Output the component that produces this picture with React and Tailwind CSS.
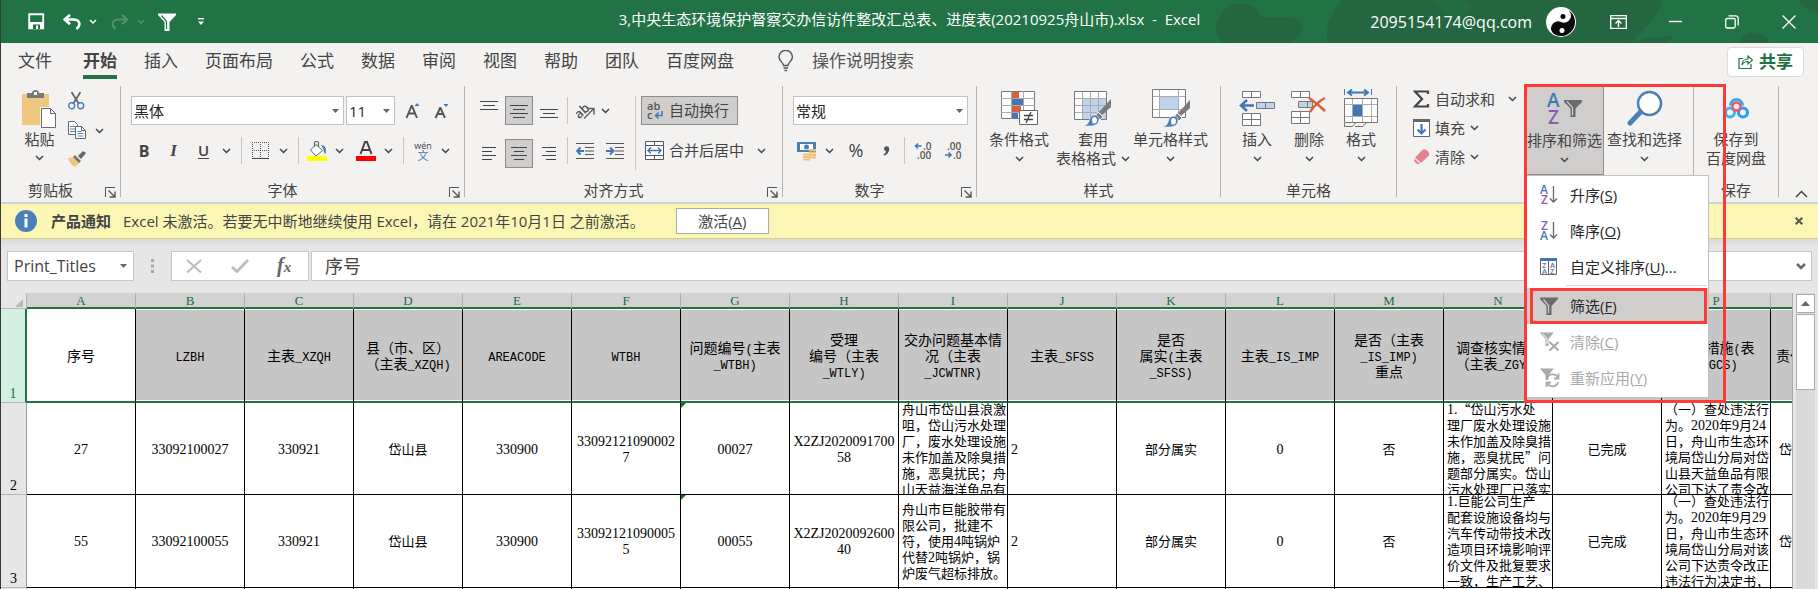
import React from "react";

/* ---------- small shared pieces ---------- */

const Svg = ({ w, h, children, className = "" }) => (
  <svg width={w} height={h} viewBox={`0 0 ${w} ${h}`} fill="none" aria-hidden="true" className={`shrink-0 ${className}`}>
    {children}
  </svg>
);

const Chevron = ({ className = "" }) => (
  <Svg w={9} h={6} className={className}>
    <path d="M1 1l3.500 3.500L8 1" stroke="#444" strokeWidth="1.500" />
  </Svg>
);

const Triangle = ({ className = "" }) => (
  <Svg w={7} h={4} className={className}>
    <path d="M0 0h7L3.500 4z" fill="#666" />
  </Svg>
);

const Launcher = () => (
  <button aria-label="对话框启动器" className="absolute right-1 bottom-1">
    <Svg w={12} h={12}>
      <path d="M1.500 11V1.500H11" stroke="#555" />
      <path d="M4.500 4.500l6 6M11 5.500V11H5.500" stroke="#555" strokeWidth="1.400" />
    </Svg>
  </button>
);

const Divider = ({ className = "h-[27px]" }) => <div className={`w-px shrink-0 bg-[#c8c6c4] ${className}`} />;

const Combo = ({ label, value, className }) => (
  <div className={`relative shrink-0 ${className}`}>
    <select
      aria-label={label}
      className="h-full w-full appearance-none border border-[#c3c1bf] bg-white pl-[2px] leading-[24px] text-[#262626] outline-none"
    >
      <option>{value}</option>
    </select>
    <Triangle className="pointer-events-none absolute top-1/2 right-[5px] -translate-y-1/2" />
  </div>
);

const Group = ({ label, launcher, className, children }) => (
  <>
    <section className={`relative flex h-[116px] shrink-0 flex-col ${className}`}>
      <div className="flex-1">{children}</div>
      <div className={`h-[21px] text-center leading-[19px] ${launcher ? "pr-[20px]" : ""}`}>{label}</div>
      {launcher && (
        <div className="absolute right-0 bottom-0">
          <Launcher />
        </div>
      )}
    </section>
    <div className="h-[111px] w-px shrink-0 bg-[#b6b4b2]" />
  </>
);

const BigButton = ({ icon, lines, inlineChevron, className = "" }) => (
  <button className={`flex shrink-0 flex-col items-center whitespace-nowrap leading-[19px] ${className}`}>
    <span className="flex h-[44px] items-center justify-center">{icon}</span>
    <span>{lines[0]}</span>
    {lines[1] ? (
      <span className="flex items-center gap-[5px]">
        {lines[1]}
        {inlineChevron && <Chevron />}
      </span>
    ) : (
      <span className="flex h-[19px] items-center">
        <Chevron />
      </span>
    )}
  </button>
);

/* ---------- icons ---------- */

const Lines = ({ w, rows, top = 0, h = 20 }) => (
  <Svg w={w} h={h}>
    {rows.map(([x, len], i) => (
      <rect key={i} x={x} y={top + i * 4} width={len} height="1" fill="#444" />
    ))}
  </Svg>
);

const Brush = ({ x, y }) => (
  <g transform={`translate(${x} ${y})`}>
    <path d="M28 0v8l-9 8-3-3z" fill="#7a7a7a" />
    <path d="M15 13l5 5-3 3-5-4z" fill="#7a7a7a" stroke="#f3f2f1" />
    <path d="M0 27c5-1 6-4 7-8 2-4 9-4 9 1 0 5-4 7-9 7z" fill="#4a80b9" stroke="#f3f2f1" strokeWidth=".6" />
    <path d="M9 21c0-4 5-4 5 0s-3 4-5 3c1-1 0-2 0-3z" fill="#fff" />
  </g>
);

const PasteIcon = () => (
  <Svg w={35} h={39}>
    <path d="M0 4h27v31H0z" fill="#edc87e" />
    <path d="M5 3h5c0-4 7-4 7 0h5v5H5z" fill="#7a7a7a" />
    <rect x="12" y="2" width="3" height="3" fill="#f3f2f1" />
    <path d="M18 17h12l5 6v15H18z" fill="#f3f2f1" />
    <path d="M19.500 18.500h9l5 5v14h-14z" fill="#fff" stroke="#6b6b6b" />
    <path d="M28.500 18.500v5h5" stroke="#6b6b6b" />
  </Svg>
);

const CutIcon = () => (
  <Svg w={17} h={19}>
    <path d="M3.500 1l7.500 12M12.500 1L5 13" stroke="#666" strokeWidth="1.800" />
    <circle cx="3.700" cy="14.700" r="3" stroke="#4a80b9" strokeWidth="1.400" />
    <circle cx="12.700" cy="14.700" r="3" stroke="#4a80b9" strokeWidth="1.400" />
  </Svg>
);

const CopyIcon = () => (
  <Svg w={18} h={19}>
    <path d="M.5.5h6l3 3v10h-9z" fill="#fff" stroke="#666" />
    <path d="M2 5.500h5M2 8h5M2 10.500h5" stroke="#4a80b9" />
    <path d="M7.500 5.500h6l4 4v8h-10z" fill="#fff" stroke="#666" />
    <path d="M13.500 5.500v4h4" stroke="#666" />
    <path d="M9.500 10.500h4M9.500 12.500h6M9.500 15h6" stroke="#4a80b9" />
  </Svg>
);

const PainterIcon = () => (
  <Svg w={18} h={16}>
    <path d="M0 7l7-1 5 5-5 5c-3-1-6-5-7-9z" fill="#edc87e" />
    <path d="M7 4l6 6-2 2-6-6z" fill="#777" />
    <path d="M10 5l5-5 3 2-5 6z" fill="#666" />
  </Svg>
);

const BorderIcon = () => (
  <Svg w={17} h={17}>
    <path d="M.5 0v16M16.500 0v16M8.500 0v16M0 .5h17M0 8.500h17" stroke="#555" strokeDasharray="1 1" />
    <path d="M0 16.500h17" stroke="#444" />
  </Svg>
);

const FillIcon = () => (
  <Svg w={20} h={20}>
    <path d="M9 3.500l6.500 6-6.500 5.500-5.500-6z" fill="#fff" stroke="#666" />
    <path d="M7.500 6V2c0-2 4-2 4 0v4" stroke="#666" strokeWidth="1.200" />
    <path d="M14 4c4 0 6 3 4.500 9-1.500-1-2-3-2-4.500z" fill="#4a80b9" />
    <rect y="15" width="20" height="5" fill="#ff0" />
  </Svg>
);

const FontColorIcon = () => (
  <Svg w={20} h={20}>
    <path d="M4.500 13L9 1h2l4.500 12M6.500 9h7" stroke="#444" strokeWidth="2" />
    <rect y="15" width="20" height="5" fill="#f00" />
  </Svg>
);

const IndentIcon = ({ right }) => (
  <Svg w={18} h={16}>
    <path d="M0 .5h18M9 4.500h9M9 8h9M9 11.500h9M0 15.500h18" stroke="#555" />
    {right ? (
      <path d="M0 8h6M4 4.500L7.500 8 4 11.500" stroke="#3f78b5" strokeWidth="2" />
    ) : (
      <path d="M2 8h6M4.500 4.500L1.200 8l3.300 3.500" stroke="#3f78b5" strokeWidth="2" />
    )}
  </Svg>
);

const OrientIcon = () => (
  <Svg w={20} h={18}>
    <text x="0" y="14" fontFamily="Open Sans" fontSize="13" fontWeight="600" fill="#555" transform="rotate(-42 6 12)">ab</text>
    <path d="M8 16.500L17.500 7M12 6.500h6v6" stroke="#666" strokeWidth="1.500" />
  </Svg>
);

const WrapIcon = () => (
  <Svg w={18} h={20}>
    <text x="0" y="9" fontFamily="Open Sans" fontSize="11" fontWeight="600" fill="#555">ab</text>
    <text x="0" y="18" fontFamily="Open Sans" fontSize="11" fontWeight="600" fill="#555">c</text>
    <path d="M15 10v4.500H9M11.500 11.500l-3 3 3 3" stroke="#3f78b5" strokeWidth="1.500" />
  </Svg>
);

const MergeIcon = () => (
  <Svg w={19} h={19}>
    <path d="M.5.5h18v18H.5zM.5 4.500h18M.5 14.500h18M9.500.5v4M9.500 14.500v4" fill="#fff" stroke="#555" />
    <path d="M3 9.500h13M6 6.500l-3 3 3 3M13 6.500l3 3-3 3" stroke="#3f78b5" strokeWidth="1.500" />
  </Svg>
);

const MoneyIcon = () => (
  <Svg w={20} h={20}>
    <path d="M0 1h19v10H0z" fill="#4a80b9" />
    <path d="M3 3h13v6H3z" fill="#fff" />
    <path d="M9.500 3.500a2.500 2.500 0 100 5 2.500 2.500 0 000-5z" fill="#4a80b9" />
    <path d="M12 9h7M12 11.500h7M12 14h7M12 16.500h7" stroke="#edc07a" strokeWidth="2" />
    <path d="M6 13.500h7M6 16h7M6 18.500h7" stroke="#edc07a" strokeWidth="2" />
  </Svg>
);

const DecimalIcon = ({ increase }) => (
  <Svg w={20} h={18}>
    <g fontFamily="Open Sans" fontSize="10" fontWeight="600" fill="#555">
      <text x={increase ? 9 : 3} y="8">{increase ? ".0" : ".00"}</text>
      <text x={increase ? 3 : 9} y="17">{increase ? ".00" : ".0"}</text>
    </g>
    {increase ? (
      <path d="M1.500 4h6M4 1.500L1.500 4 4 6.500" stroke="#3f78b5" strokeWidth="1.600" />
    ) : (
      <path d="M1 13h6M4.500 10.500L7 13l-2.500 2.500" stroke="#3f78b5" strokeWidth="1.600" />
    )}
  </Svg>
);

const CondFormatIcon = () => (
  <Svg w={38} h={36}>
    <path d="M1.500 1.500h33v27h-33z" fill="#fff" stroke="#777" />
    <path d="M1 8.500h34M1 15.500h34M1 22.500h34M11.500 1v28M23.500 1v28" stroke="#aaa" />
    <path d="M12 2h7v6h-7zM12 16h9v6h-9z" fill="#d9603b" />
    <path d="M12 9h11v6H12zM12 23h6v5h-6z" fill="#3f78b5" />
    <path d="M19.500 20.500h18v14h-18z" fill="#fff" stroke="#666" />
    <path d="M24 25.500h9M24 29.500h9M31 22l-5 11" stroke="#444" strokeWidth="1.300" />
  </Svg>
);

const TableFormatIcon = () => (
  <Svg w={38} h={36}>
    <path d="M.5 1.500h32v28H.5z" fill="#fff" stroke="#777" />
    <path d="M9 9h23v20H9z" fill="#bfd3ea" />
    <path d="M1 8.500h31M1 15.500h31M1 22.500h31M8.500 2v27M16.500 2v27M24.500 2v27" stroke="#aaa" />
    <Brush x={9} y={9} />
  </Svg>
);

const CellStyleIcon = () => (
  <Svg w={38} h={38}>
    <path d="M.5.500h33v28H.5z" fill="#fff" stroke="#777" />
    <path d="M1 7.500h32M1 20.500h32M7.500 1v27M26.500 1v27" stroke="#aaa" />
    <path d="M8 8h18v12H8z" fill="#bfd3ea" />
    <Brush x={10} y={11} />
  </Svg>
);

const InsertIcon = () => (
  <Svg w={36} h={36}>
    <path d="M3.500 1.500h18v6h-18zM12.500 1.500v6M3.500 23.500h18v12h-18zM3.500 29.500h18M12.500 23.500v12" fill="#fff" stroke="#777" />
    <path d="M17.500 12.500h18v6h-18z" fill="#bfd3ea" stroke="#777" />
    <path d="M26.500 12.500v6" stroke="#777" />
    <path d="M2 15.500h13M8 10l-6 5.500L8 21" stroke="#3f78b5" strokeWidth="2.500" />
  </Svg>
);

const DeleteIcon = () => (
  <Svg w={36} h={36}>
    <path d="M.5 1.500h18v6h-18zM9.500 1.500v6M.5 21.500h18v12h-18zM.5 27.500h18M9.500 21.500v12" fill="#fff" stroke="#777" />
    <path d="M7.500 11.500h14v6h-14z" fill="#bfd3ea" stroke="#777" />
    <path d="M16.500 11.500v6" stroke="#777" />
    <path d="M18 8c6 4 11 8 16 13M34 8c-6 3-11 8-15 14" stroke="#d9603b" strokeWidth="2.500" />
  </Svg>
);

const FormatIcon = () => (
  <Svg w={36} h={38}>
    <path d="M1.500 0v6M28.500 0v6" stroke="#3f78b5" />
    <path d="M5 3.500h20M9 .5l-4 3 4 3M21 .5l4 3-4 3" stroke="#3f78b5" strokeWidth="2" />
    <path d="M1.500 9.500h33v24h-33z" fill="#fff" stroke="#777" />
    <path d="M2 15.500h32M2 27.500h32M9.500 10v23M19.500 10v23M28.500 10v23" stroke="#aaa" />
    <path d="M10 16h9v11h-9z" fill="#3f78b5" />
    <path d="M1.500 34v3.500h8l3-3.500M12 37.500h8l3-3.500" stroke="#777" />
  </Svg>
);

const SumIcon = () => (
  <Svg w={17} h={18}>
    <path d="M15 4V1.500H2l7 7.500-7 7.500h13V14" stroke="#444" strokeWidth="2.200" />
  </Svg>
);

const FillDownIcon = () => (
  <Svg w={17} h={18}>
    <path d="M.5.500h16v17H.5z" fill="#fff" stroke="#666" />
    <path d="M0 0h17v3H0z" fill="#666" />
    <path d="M8.500 5v9M4.500 10.500l4 4 4-4" stroke="#3f78b5" strokeWidth="2.200" />
  </Svg>
);

const EraserIcon = () => (
  <Svg w={17} h={16}>
    <path d="M10 0.500h3l3 3v3L8 14 2 8.500z" fill="#e6808f" />
    <path d="M1.500 9.500L7 15H4l-3-3z" fill="#e6808f" />
  </Svg>
);

const Funnel = ({ fill = "#6b6b6b", inner = "#fff" }) => (
  <Svg w={18} h={18}>
    <path d="M0 .5h18v1.500L11.500 9v9h-5V9L0 2z" fill={fill} />
    <path d="M3.500 2.500L8.500 8.500v7.500" stroke={inner} strokeWidth="1.200" />
  </Svg>
);

const GlyphA = ({ x, y, s = 1 }) => (
  <text x={x} y={y} fontFamily="Open Sans" fontWeight="600" fontSize={10 * s} fill="#3f78b5">A</text>
);
const GlyphZ = ({ x, y, s = 1 }) => (
  <text x={x} y={y} fontFamily="Open Sans" fontWeight="600" fontSize={10 * s} fill="#8e5ab5">Z</text>
);

const SortFilterIcon = () => (
  <Svg w={36} h={34}>
    <GlyphA x={0} y={15} s={1.9} />
    <GlyphZ x={1} y={32} s={1.9} />
    <path d="M17 8h18v2l-6.500 6.500V25h-5v-8.500L17 10z" fill="#6b6b6b" />
    <path d="M20 9.500l5.500 6v8" stroke="#d0cecd" strokeWidth="1.200" />
  </Svg>
);

const SearchIcon = () => (
  <Svg w={36} h={36}>
    <circle cx="22.500" cy="13.500" r="11.500" fill="#fff" stroke="#4a80b9" strokeWidth="2.500" />
    <path d="M13.500 22L3 33" stroke="#4a80b9" strokeWidth="5" strokeLinecap="round" />
  </Svg>
);

const NetdiskIcon = () => (
  <Svg w={25} h={21}>
    <circle cx="6" cy="14.500" r="4.500" stroke="#38b6f0" strokeWidth="3" />
    <circle cx="19" cy="14.500" r="4.500" stroke="#2a9df0" strokeWidth="3" />
    <path d="M6.500 7.500a6 6 0 0112 0" stroke="#38a6f0" strokeWidth="3" />
    <circle cx="12.500" cy="8.500" r="4" stroke="#ef5468" strokeWidth="2.500" />
  </Svg>
);

const SortIcon = ({ desc }) => (
  <Svg w={18} h={20}>
    {desc ? <GlyphZ x={1} y={9} s={1.2} /> : <GlyphA x={0} y={9} s={1.2} />}
    {desc ? <GlyphA x={0} y={19} s={1.2} /> : <GlyphZ x={1} y={19} s={1.2} />}
    <path d="M13.500 1v16M10 13.500l3.500 3.500 3.500-3.500" stroke="#666" strokeWidth="1.300" />
  </Svg>
);

const CustomSortIcon = () => (
  <Svg w={18} h={18}>
    <path d="M.5.500h16v16H.5zM8.500 1v16" fill="#fff" stroke="#666" />
    <path d="M0 0h17v3H0z" fill="#3f78b5" />
    <GlyphZ x={2} y={9.5} s={0.75} />
    <GlyphA x={2} y={16} s={0.75} />
    <GlyphA x={10} y={9.5} s={0.75} />
    <GlyphZ x={10} y={16} s={0.75} />
  </Svg>
);

const ClearFilterIcon = () => (
  <Svg w={20} h={20}>
    <path d="M0 .5h14L8.500 7v7h-3V7z" fill="#a9a9a9" />
    <path d="M3 2l4 5v5" stroke="#fff" />
    <path d="M9.500 10l9 8.500M18.500 10l-9 8.500" stroke="#a9a9a9" strokeWidth="2" />
  </Svg>
);

const ReapplyIcon = () => (
  <Svg w={20} h={20}>
    <path d="M0 .5h14L8.500 7v5h-3V7z" fill="#a9a9a9" />
    <path d="M7 11c1-6 9-6 11-1M18.500 5.500V10.500H14M18 14c-1 5-8 6-11 1M6.500 19v-4.500H11" stroke="#a9a9a9" strokeWidth="1.800" />
  </Svg>
);

/* ---------- title bar ---------- */

function TitleBar() {
  return (
    <header className="relative grid h-[43px] grid-cols-[1fr_auto_1fr] items-center overflow-hidden bg-[#217346] text-white">
      <svg viewBox="0 0 640 43" width="640" height="43" aria-hidden="true" className="absolute top-0 right-0">
        <path d="M46 43c-10-8-10-20-2-30 8-12 30-14 38 2 4 8 42-6 42 12 0 8-6 12-12 16z" fill="#246640" />
        <path d="M150 43c-4-18 4-32 14-43h320c-4 20-22 30-30 43z" fill="#246640" />
        <path d="M254 0h32l8 6-12 12-14-3z" fill="#226d43" />
        <path d="M455 43c10-6 25-6 40-7l-6 7zM562 43c4-14 22-14 30 0zM620 0h20v12c-12 0-16-6-20-12z" fill="#246640" />
      </svg>
      <div className="relative flex items-center pl-[27px]">
        <button aria-label="保存">
          <Svg w={17} h={17}>
            <path d="M1.200 1.200h14v14h-14z" stroke="#fff" strokeWidth="1.900" />
            <path d="M2 9h13v7H2z" fill="#fff" />
            <path d="M5 11.500h7V16H5z" fill="#217346" />
            <path d="M8 12.500h2V16H8z" fill="#fff" />
          </Svg>
        </button>
        <button aria-label="撤消" className="ml-[18px]">
          <Svg w={18} h={16}>
            <path d="M2 5.500h8c7.500 0 8 6 3.500 9.500M7 .8L1.800 5.500 7 10.200" stroke="#fff" strokeWidth="2.600" />
          </Svg>
        </button>
        <Svg w={8} h={5} className="ml-2">
          <path d="M1 1l3 3 3-3" stroke="#fff" strokeWidth="1.400" />
        </Svg>
        <button aria-label="恢复" className="ml-[14px]" disabled>
          <Svg w={18} h={16}>
            <path d="M16 5.500H8C.5 5.500 0 11.500 4.500 15M11 .8l5.200 4.700L11 10.200" stroke="#4f9170" strokeWidth="2.200" />
          </Svg>
        </button>
        <Svg w={8} h={5} className="ml-2">
          <path d="M1 1l3 3 3-3" stroke="#4f9170" strokeWidth="1.400" />
        </Svg>
        <button aria-label="筛选" className="ml-[13px]">
          <Funnel fill="#fff" inner="#217346" />
        </button>
        <button aria-label="自定义快速访问工具栏" className="ml-[22px]">
          <Svg w={6} h={7}>
            <path d="M0 .7h6" stroke="#fff" strokeWidth="1.400" />
            <path d="M0 3.500h6L3 7z" fill="#fff" />
          </Svg>
        </button>
      </div>
      <h1 className="relative pb-[5px] text-[15px] leading-5 whitespace-pre">
        3,中央生态环境保护督察交办信访件整改汇总表、进度表(20210925舟山市).xlsx{"  -  "}Excel
      </h1>
      <div className="relative flex items-center justify-end pr-[22px]">
        <span className="text-[16px] leading-5">2095154174@qq.com</span>
        <Svg w={30} h={30} className="ml-[14px]">
          <circle cx="15" cy="15" r="15" fill="#fff" />
          <path d="M15 1a14 14 0 010 28 7 7 0 010-14 7 7 0 000-14z" fill="#0a0a0a" transform="rotate(25 15 15)" />
          <circle cx="17" cy="9.500" r="2.500" fill="#0a0a0a" />
          <circle cx="16" cy="23.500" r="2.500" fill="#fff" />
        </Svg>
        <button aria-label="功能区显示选项" className="ml-[34px]">
          <Svg w={17} h={14}>
            <path d="M.7.700h15.600v12.600H.7zM.7 3.500h15.600" stroke="#fff" strokeWidth="1.300" />
            <path d="M8.500 12V6M5.500 8.500l3-3 3 3" stroke="#fff" strokeWidth="1.400" />
          </Svg>
        </button>
        <button aria-label="最小化" className="ml-[42px]">
          <Svg w={13} h={14}>
            <path d="M0 6.500h13" stroke="#fff" strokeWidth="1.400" />
          </Svg>
        </button>
        <button aria-label="还原" className="ml-[43px]">
          <Svg w={14} h={14}>
            <rect x=".7" y="3.500" width="9.500" height="9.500" rx="1.500" stroke="#fff" strokeWidth="1.300" />
            <path d="M3.500.8h7c2 0 2.700 1 2.700 2.700v7" stroke="#fff" strokeWidth="1.300" />
          </Svg>
        </button>
        <button aria-label="关闭" className="ml-[43px]">
          <Svg w={14} h={14}>
            <path d="M.5.500l13 13M13.500.500l-13 13" stroke="#fff" strokeWidth="1.300" />
          </Svg>
        </button>
      </div>
    </header>
  );
}

/* ---------- ribbon ---------- */

const TABS = ["插入", "页面布局", "公式", "数据", "审阅", "视图", "帮助", "团队", "百度网盘"];

function Tabs() {
  return (
    <nav className="flex h-[43px] items-start pt-[4px] pr-[14px] pl-[17px] text-[17px] leading-[28px] text-[#444]">
      <button className="mr-[31px]">文件</button>
      <button className="mr-[27px] border-b-4 border-[#217346] font-bold">开始</button>
      <div className="flex gap-[27px]">
        {TABS.map((t) => (
          <button key={t}>{t}</button>
        ))}
      </div>
      <label className="ml-[44px] flex items-center gap-[18px]">
        <Svg w={16} h={22}>
          <path d="M5.500 15.500c0-3-4.500-4.500-4.500-8.500a6.700 6.700 0 0113.400 0c0 4-4.400 5.500-4.400 8.500zM5.500 18h4.500M6.500 20.500h2.500" stroke="#555" strokeWidth="1.400" />
        </Svg>
        <input
          aria-label="操作说明搜索"
          placeholder="操作说明搜索"
          className="w-[160px] bg-transparent leading-[28px] outline-none placeholder:text-[#555] placeholder:opacity-100"
        />
      </label>
      <button className="ml-auto flex h-[30px] items-center gap-[6px] rounded-sm border border-[#dddbd9] bg-white px-[10px] font-bold text-[#217346]">
        <Svg w={15} h={16}>
          <path d="M5 4.500H1v10h12V10" stroke="#217346" strokeWidth="1.200" />
          <path d="M4 11c0-4 3-6 6-6V2l4.500 4L10 10V7.500C7 7.500 5 9 4 11z" stroke="#217346" strokeWidth="1.200" />
        </Svg>
        共享
      </button>
    </nav>
  );
}

const MENU = [
  { icon: <SortIcon />, text: "升序", k: "S" },
  { icon: <SortIcon desc />, text: "降序", k: "O" },
  { icon: <CustomSortIcon />, text: "自定义排序", k: "U", tail: "..." },
  { icon: <Funnel fill="#6b6b6b" inner="#d0cecd" />, text: "筛选", k: "F", active: true },
  { icon: <ClearFilterIcon />, text: "清除", k: "C", disabled: true },
  { icon: <ReapplyIcon />, text: "重新应用", k: "Y", disabled: true },
];

function SortMenu() {
  return (
    <ul role="menu" className="absolute top-[89px] left-0 z-20 w-[183px] border border-[#c3c1bf] border-l-transparent bg-white py-px">
      {MENU.map((m) => (
        <li key={m.text} role="none">
          {m.active && <div className="mr-px ml-[39px] h-[3px] border-t border-[#d8d6d4]" />}
          <button
            role="menuitem"
            disabled={m.disabled}
            className={`relative flex h-9 w-full items-center pl-[13px] whitespace-nowrap ${
              m.active ? "bg-[#d0cecd] text-[#262626]" : m.disabled ? "text-[#a9a9a9]" : "text-[#262626]"
            }`}
          >
            <span className="w-[30px]">{m.icon}</span>
            <span>
              {m.text}(<u>{m.k}</u>){m.tail}
            </span>
            {m.active && <span className="absolute inset-y-0 right-px left-[3px] border-[3px] border-[#ff3838]" />}
          </button>
        </li>
      ))}
    </ul>
  );
}

function Ribbon() {
  return (
    <div className="flex h-[118px] border-b-2 border-[#d2d0ce] text-[15px] text-[#444]">
      <Group label="剪贴板" launcher className="w-[119px]">
        <div className="flex pt-[4px] pl-[20px]">
          <button className="flex w-[37px] flex-col items-center leading-[19px]">
            <PasteIcon />
            <span className="mt-px whitespace-nowrap">粘贴</span>
            <span className="flex h-[17px] items-center">
              <Chevron />
            </span>
          </button>
          <div className="ml-[10px] flex flex-col gap-[11px] pt-px">
            <button aria-label="剪切">
              <CutIcon />
            </button>
            <button aria-label="复制" className="flex items-center gap-[9px]">
              <CopyIcon />
              <Chevron />
            </button>
            <button aria-label="格式刷">
              <PainterIcon />
            </button>
          </div>
        </div>
      </Group>

      <Group label="字体" launcher className="w-[343px]">
        <div className="flex items-center pt-[10px] pl-[10px]">
          <Combo label="字体" value="黑体" className="h-[29px] w-[213px]" />
          <Combo label="字号" value="11" className="ml-[2px] h-[29px] w-[49px]" />
          <button aria-label="增大字号" className="ml-[10px]">
            <Svg w={16} h={18}>
              <path d="M1.500 16L6.500 4h.5l5 12M3.500 11.500h6.500" stroke="#555" strokeWidth="1.900" />
              <path d="M9.500 4h5L12 1z" fill="#3f78b5" />
            </Svg>
          </button>
          <button aria-label="减小字号" className="ml-[13px]">
            <Svg w={16} h={18}>
              <path d="M1.500 16L6 6h.5l4.500 10M3.500 12h5.500" stroke="#555" strokeWidth="1.900" />
              <path d="M9.500 2h5L12 5z" fill="#3f78b5" />
            </Svg>
          </button>
        </div>
        <div className="mt-[11px] flex h-[29px] items-center pl-[9px]">
          <button className="w-[28px] font-[Open_Sans] text-[16px] font-bold">B</button>
          <button className="w-[31px] font-[Liberation_Serif] text-[17px] font-bold italic">I</button>
          <button className="w-[29px] font-[Open_Sans] text-[15px] font-semibold underline underline-offset-2">U</button>
          <Chevron className="ml-1" />
          <Divider className="ml-[10px] h-[27px]" />
          <button aria-label="边框" className="ml-[10px] flex items-center gap-[10px]">
            <BorderIcon />
            <Chevron />
          </button>
          <Divider className="ml-[10px] h-[27px]" />
          <button aria-label="填充颜色" className="ml-[8px] flex items-center gap-[8px]">
            <FillIcon />
            <Chevron />
          </button>
          <button aria-label="字体颜色" className="ml-[12px] flex items-center gap-[8px]">
            <FontColorIcon />
            <Chevron />
          </button>
          <Divider className="ml-[10px] h-[27px]" />
          <button aria-label="拼音指南" className="ml-[10px] flex items-center gap-[9px]">
            <span className="flex w-[18px] flex-col items-center text-[9px] leading-[9px]">
              wén<b className="text-[11px] leading-[11px] font-normal text-[#3f78b5]">文</b>
            </span>
            <Chevron />
          </button>
        </div>
      </Group>

      <Group label="对齐方式" launcher className="w-[317px]">
        <div className="flex pt-[10px] pl-[10px]">
          <div className="grid grid-cols-[28px_28px_28px] gap-x-[2px] gap-y-[11px]">
            <button aria-label="顶端对齐" className="flex h-[29px] items-center justify-center">
              <Lines w={18} rows={[[0, 18], [3, 12], [0, 18]]} />
            </button>
            <button aria-label="垂直居中" className="flex h-[29px] items-center justify-center border border-[#8f8d8b] bg-[#d0cecd]">
              <Lines w={18} top={4} rows={[[0, 18], [3, 12], [0, 18], [3, 12]]} />
            </button>
            <button aria-label="底端对齐" className="flex h-[29px] items-center justify-center">
              <Lines w={18} top={8} rows={[[0, 18], [3, 12], [0, 18]]} />
            </button>
            <button aria-label="左对齐" className="flex h-[29px] items-center justify-center">
              <Lines w={14} top={4} rows={[[0, 14], [0, 10], [0, 14], [0, 10]]} />
            </button>
            <button aria-label="居中" className="flex h-[29px] items-center justify-center border border-[#8f8d8b] bg-[#d0cecd]">
              <Lines w={16} top={4} rows={[[0, 16], [3, 10], [0, 16], [3, 10]]} />
            </button>
            <button aria-label="右对齐" className="flex h-[29px] items-center justify-center">
              <Lines w={14} top={4} rows={[[0, 14], [4, 10], [0, 14], [4, 10]]} />
            </button>
          </div>
          <div className="ml-[4px] flex flex-col gap-[13px] pt-px">
            <Divider />
            <Divider />
          </div>
          <div className="ml-[8px] flex w-[59px] flex-col gap-[11px]">
            <button aria-label="方向" className="flex h-[29px] items-center gap-[5px]">
              <OrientIcon />
              <Chevron />
            </button>
            <div className="flex h-[29px] items-center gap-[12px]">
              <button aria-label="减少缩进量">
                <IndentIcon />
              </button>
              <button aria-label="增加缩进量">
                <IndentIcon right />
              </button>
            </div>
          </div>
          <Divider className="h-[74px]" />
          <div className="ml-[5px] flex flex-col items-start gap-[11px] whitespace-nowrap">
            <button className="flex h-[29px] items-center gap-[4px] border border-[#8f8d8b] bg-[#d0cecd] pr-[8px] pl-[5px]">
              <WrapIcon />
              自动换行
            </button>
            <button className="flex h-[29px] items-center gap-[5px] pl-[4px]">
              <MergeIcon />
              合并后居中
              <Chevron className="ml-[8px]" />
            </button>
          </div>
        </div>
      </Group>

      <Group label="数字" launcher className="w-[193px]">
        <div className="pt-[10px] pl-[10px]">
          <Combo label="数字格式" value="常规" className="h-[29px] w-[175px]" />
          <div className="mt-[11px] flex h-[29px] items-center pl-[4px]">
            <button aria-label="会计数字格式" className="flex items-center gap-[8px]">
              <MoneyIcon />
              <Chevron />
            </button>
            <button className="ml-[12px] w-[20px] text-[18px]">%</button>
            <button aria-label="千位分隔样式" className="ml-[17px]">
              <Svg w={7} h={10}>
                <path d="M1 2.500a2.700 2.700 0 015.300 0C6.300 6 4 9 1 9.500l-.5-1C2 7.500 3 6.500 3 5 2 5 1 4 1 2.500z" fill="#555" />
              </Svg>
            </button>
            <Divider className="ml-[14px] h-[27px]" />
            <button aria-label="增加小数位数" className="ml-[9px]">
              <DecimalIcon increase />
            </button>
            <button aria-label="减少小数位数" className="ml-[10px]">
              <DecimalIcon />
            </button>
          </div>
        </div>
      </Group>

      <Group label="样式" className="w-[243px]">
        <div className="flex">
          <BigButton icon={<CondFormatIcon />} lines={["条件格式"]} className="ml-[5px] w-[74px]" />
          <BigButton icon={<TableFormatIcon />} lines={["套用", "表格格式"]} inlineChevron className="w-[74px]" />
          <BigButton icon={<CellStyleIcon />} lines={["单元格样式"]} className="w-[81px]" />
        </div>
      </Group>

      <Group label="单元格" className="w-[175px]">
        <div className="flex pl-[10px]">
          <BigButton icon={<InsertIcon />} lines={["插入"]} className="w-[52px]" />
          <BigButton icon={<DeleteIcon />} lines={["删除"]} className="w-[52px]" />
          <BigButton icon={<FormatIcon />} lines={["格式"]} className="w-[52px]" />
        </div>
      </Group>

      <Group className="w-[296px]">
        <div className="flex">
          <div className="flex w-[129px] shrink-0 flex-col items-start pl-[16px] whitespace-nowrap">
            <button className="flex h-[26px] items-center gap-[5px]">
              <SumIcon />
              自动求和
              <Chevron className="ml-[8px]" />
            </button>
            <button className="mt-[3px] flex h-[26px] items-center gap-[5px]">
              <FillDownIcon />
              填充
              <Chevron />
            </button>
            <button className="mt-[3px] flex h-[26px] items-center gap-[5px]">
              <EraserIcon />
              清除
              <Chevron />
            </button>
          </div>
          <div className="relative pt-px">
            <BigButton
              icon={<SortFilterIcon />}
              lines={["排序和筛选"]}
              className="h-[88px] w-[78px] border-r border-b border-[#8f8d8b] bg-[#d0cecd]"
            />
            <SortMenu />
            <div className="pointer-events-none absolute top-[-2px] left-[-2px] z-30 h-[319px] w-[202px] border-[3px] border-[#ff3838]" />
          </div>
          <BigButton icon={<SearchIcon />} lines={["查找和选择"]} className="w-[81px]" />
        </div>
      </Group>

      <Group label="保存" className="w-[84px]">
        <BigButton icon={<NetdiskIcon />} lines={["保存到", "百度网盘"]} className="w-full" />
      </Group>

      <button aria-label="折叠功能区" className="mt-auto mr-[10px] mb-1 ml-auto">
        <Svg w={13} h={8}>
          <path d="M1 7l5.500-5.500L12 7" stroke="#444" strokeWidth="1.500" />
        </Svg>
      </button>
    </div>
  );
}

/* ---------- notice and formula bar ---------- */

function Notice() {
  return (
    <div className="flex h-[35px] items-center border-b border-[#d6d08a] bg-[#fcf6b5] pr-[15px] pl-[14px] text-[15px] leading-5 whitespace-nowrap text-[#444]">
      <Svg w={22} h={22}>
        <circle cx="11" cy="11" r="11" fill="#4a80b9" />
        <rect x="9.500" y="4" width="3" height="3" fill="#fff" />
        <rect x="9.500" y="8.500" width="3" height="9" fill="#fff" />
      </Svg>
      <strong className="ml-[14px]">产品通知</strong>
      <span className="ml-[12px]">Excel 未激活。若要无中断地继续使用 Excel，请在 2021年10月1日 之前激活。</span>
      <button className="ml-[31px] h-[26px] w-[93px] border border-[#ababab] bg-white">
        激活(<u>A</u>)
      </button>
      <button aria-label="关闭通知" className="ml-auto">
        <Svg w={8} h={8}>
          <path d="M.7.700l6.600 6.600M7.300.700L.7 7.300" stroke="#555" strokeWidth="2" />
        </Svg>
      </button>
    </div>
  );
}

function FormulaBar() {
  return (
    <div className="flex h-[54px] items-center bg-linear-to-b from-[#d9d9d9] to-[#e6e6e6] to-15% pr-[6px] pl-[6px] text-[#444]">
      <div className="relative h-[30px] w-[127px] shrink-0">
        <select aria-label="名称框" className="h-full w-full appearance-none border border-[#c6c6c6] bg-white pl-[6px] text-[16px] leading-7 outline-none">
          <option>Print_Titles</option>
        </select>
        <Triangle className="pointer-events-none absolute top-[13px] right-[7px]" />
      </div>
      <Svg w={3} h={14} className="ml-[17px]">
        <path d="M0 0h3v3H0zM0 5.500h3v3H0zM0 11h3v3H0z" fill="#a6a6a6" />
      </Svg>
      <div className="ml-[17px] flex h-[30px] w-[138px] shrink-0 items-center border border-[#c6c6c6] bg-white">
        <button aria-label="取消" className="ml-[14px]">
          <Svg w={16} h={14}>
            <path d="M1 1l14 12.500M15 1L1 13.500" stroke="#bdbdbd" strokeWidth="2" />
          </Svg>
        </button>
        <button aria-label="输入" className="ml-[29px]">
          <Svg w={18} h={14}>
            <path d="M1 8l5 4.500L17 1" stroke="#bdbdbd" strokeWidth="2.800" />
          </Svg>
        </button>
        <button aria-label="插入函数" className="ml-[28px] font-[Liberation_Serif] text-[20px] leading-6 font-bold text-[#666] italic">
          f<span className="text-[15px]">x</span>
        </button>
      </div>
      <label className="ml-[2px] flex h-[30px] min-w-0 flex-1 items-center border border-[#c6c6c6] bg-white pr-[5px] pl-[13px]">
        <input aria-label="编辑栏" defaultValue="序号" className="min-w-0 flex-1 text-[18px] leading-7 outline-none" />
        <Svg w={10} h={7}>
          <path d="M1 1l4 4 4-4" stroke="#666" strokeWidth="2.500" />
        </Svg>
      </label>
    </div>
  );
}

/* ---------- sheet ---------- */

const COLUMNS = "ABCDEFGHIJKLMNOPQ".split("");

const HEADINGS = [
  ["序号"],
  ["LZBH"],
  ["主表_XZQH"],
  ["县（市、区）", "（主表_XZQH)"],
  ["AREACODE"],
  ["WTBH"],
  ["问题编号(主表", "_WTBH)"],
  ["受理", "编号（主表", "_WTLY)"],
  ["交办问题基本情", "况（主表", "_JCWTNR)"],
  ["主表_SFSS"],
  ["是否", "属实(主表", "_SFSS)"],
  ["主表_IS_IMP"],
  ["是否（主表", "_IS_IMP)", "重点"],
  ["调查核实情况", "（主表_ZGYQ)"],
  [],
  ["整改措施(表", "_ZGCS)"],
  ["责任"],
];

const ROWS = [
  [
    ["27"], ["33092100027"], ["330921"], ["岱山县"], ["330900"], ["33092121090002", "7"], ["00027"],
    ["X2ZJ2020091700", "58"],
    ["舟山市岱山县浪激", "咀，岱山污水处理", "厂，废水处理设施", "未作加盖及除臭措", "施，恶臭扰民；舟", "山天益海洋鱼品有"],
    ["2"], ["部分属实"], ["0"], ["否"],
    ["1.“岱山污水处", "理厂废水处理设施", "未作加盖及除臭措", "施，恶臭扰民”问", "题部分属实。岱山", "污水处理厂已落实"],
    ["已完成"],
    ["（一）查处违法行", "为。2020年9月24", "日，舟山市生态环", "境局岱山分局对岱", "山县天益鱼品有限", "公司下达了责令改"],
    ["岱"],
  ],
  [
    ["55"], ["33092100055"], ["330921"], ["岱山县"], ["330900"], ["33092121090005", "5"], ["00055"],
    ["X2ZJ2020092600", "40"],
    ["舟山市巨能胶带有", "限公司，批建不", "符，使用4吨锅炉", "代替2吨锅炉，锅", "炉废气超标排放。"],
    ["2"], ["部分属实"], ["0"], ["否"],
    ["1.巨能公司生产", "配套设施设备均与", "汽车传动带技术改", "造项目环境影响评", "价文件及批复要求", "一致，生产工艺、"],
    ["已完成"],
    ["（一）查处违法行", "为。2020年9月29", "日，舟山市生态环", "境局岱山分局对该", "公司下达责令改正", "违法行为决定书，"],
    ["岱"],
  ],
];

const bodyAlign = (i) => {
  if ([8, 9, 13, 15].includes(i)) return "items-start pl-[3px]";
  return i === 16 ? "items-start pl-[8px]" : "items-center";
};

const Mixed = ({ text, latin }) =>
  text.split(/([\x20-\x7e]+)/).map((part, i) =>
    i % 2 ? (
      <span key={i} className={latin}>
        {part}
      </span>
    ) : (
      part
    )
  );

const CellText = ({ lines, latin, align, height }) => (
  <div className={`flex flex-col justify-center overflow-hidden leading-4 whitespace-nowrap ${height} ${align}`}>
    {lines.map((l, i) => (
      <div key={i} className="h-4 shrink-0">
        <Mixed text={l} latin={latin} />
      </div>
    ))}
  </div>
);

function Sheet() {
  return (
    <div className="flex bg-[#e6e6e6]">
      <div className="h-[296px] min-w-0 flex-1 overflow-hidden border-r border-[#ababab]">
        <table className="w-[1879px] table-fixed border-separate border-spacing-0 bg-white font-['Noto_Sans_CJK_SC',sans-serif] text-[13px] text-black">
          <colgroup>
            <col className="w-[26px]" />
            {COLUMNS.map((c) => (
              <col key={c} className="w-[109px]" />
            ))}
          </colgroup>
          <thead>
            <tr className="h-[16px] font-[Liberation_Serif] text-[13px] leading-[12px] text-[#1d6b41]">
              <th aria-label="全选" className="border-r border-b border-[#b5b5b5] bg-[#e6e6e6] p-0">
                <Svg w={8} h={8} className="mt-1 mr-[3px] ml-auto">
                  <path d="M8 0v8H0z" fill="#b8b8b8" />
                </Svg>
              </th>
              {COLUMNS.map((c) => (
                <th key={c} scope="col" className="border-r border-b-2 border-r-[#b0b0b0] border-b-[#217346] bg-[#d2d2d2] p-0 pt-[2px] font-normal">
                  {c}
                </th>
              ))}
            </tr>
          </thead>
          <tbody>
            <tr>
              <th scope="row" className="border-r-2 border-b border-r-[#217346] border-b-[#b5b5b5] bg-[#d3f0e0] p-0 align-bottom font-[Liberation_Serif] text-[14px] leading-[16px] font-normal text-[#1d6b41]">
                1
              </th>
              {HEADINGS.map((h, i) => (
                <td
                  key={i}
                  className={`border-r border-b-2 border-r-black border-b-[#217346] p-0 text-[14px] shadow-[inset_0_1px_#fff,inset_0_-1px_#fff] ${
                    i === 0 ? "bg-white" : "bg-[#c6c6c6]"
                  }`}
                >
                  <CellText
                    lines={h}
                    align={i === 16 ? "items-start pl-[5px]" : "items-center"}
                    height="h-[92px]"
                    latin="font-[Liberation_Mono] text-[12px]"
                  />
                </td>
              ))}
            </tr>
            {ROWS.map((cells, r) => (
              <tr key={r}>
                <th scope="row" className="border-r border-b border-r-[#9a9a9a] border-b-[#b5b5b5] bg-[#e6e6e6] p-0 align-bottom font-[Liberation_Serif] text-[14px] leading-[16px] font-normal text-black">
                  {r + 2}
                </th>
                {cells.map((lines, i) => (
                  <td key={i} className="relative border-r border-b border-black p-0">
                    {i === 6 && (
                      <Svg w={5} h={5} className="absolute top-0 left-0">
                        <path d="M0 0h5L0 5z" fill="#107c10" />
                      </Svg>
                    )}
                    <CellText
                      lines={lines}
                      align={bodyAlign(i)}
                      height={r === 0 ? "h-[91px]" : "h-[92px]"}
                      latin="font-[Liberation_Serif] text-[14px]"
                    />
                  </td>
                ))}
              </tr>
            ))}
            <tr>
              <th scope="row" aria-label="4" className="h-4 border-r border-[#9a9a9a] bg-[#e6e6e6] p-0" />
              {COLUMNS.map((c) => (
                <td key={c} className="border-r border-black p-0" />
              ))}
            </tr>
          </tbody>
        </table>
      </div>
      <div className="mr-[3px] ml-[3px] flex w-[19px] shrink-0 flex-col bg-[#dadada] pt-px">
        <button aria-label="向上滚动" className="flex h-[19px] items-center justify-center border border-[#ababab] bg-white">
          <Svg w={9} h={5}>
            <path d="M0 5h9L4.500 0z" fill="#666" />
          </Svg>
        </button>
        <div className="mt-px h-[76px] border border-[#ababab] bg-white" />
      </div>
    </div>
  );
}

export default function App() {
  return (
    <div className="max-h-screen overflow-hidden border-l border-[#3a3a3a] bg-[#f3f2f1] font-['Open_Sans','Noto_Sans_CJK_SC',sans-serif]">
      <TitleBar />
      <Tabs />
      <Ribbon />
      <Notice />
      <FormulaBar />
      <Sheet />
    </div>
  );
}
